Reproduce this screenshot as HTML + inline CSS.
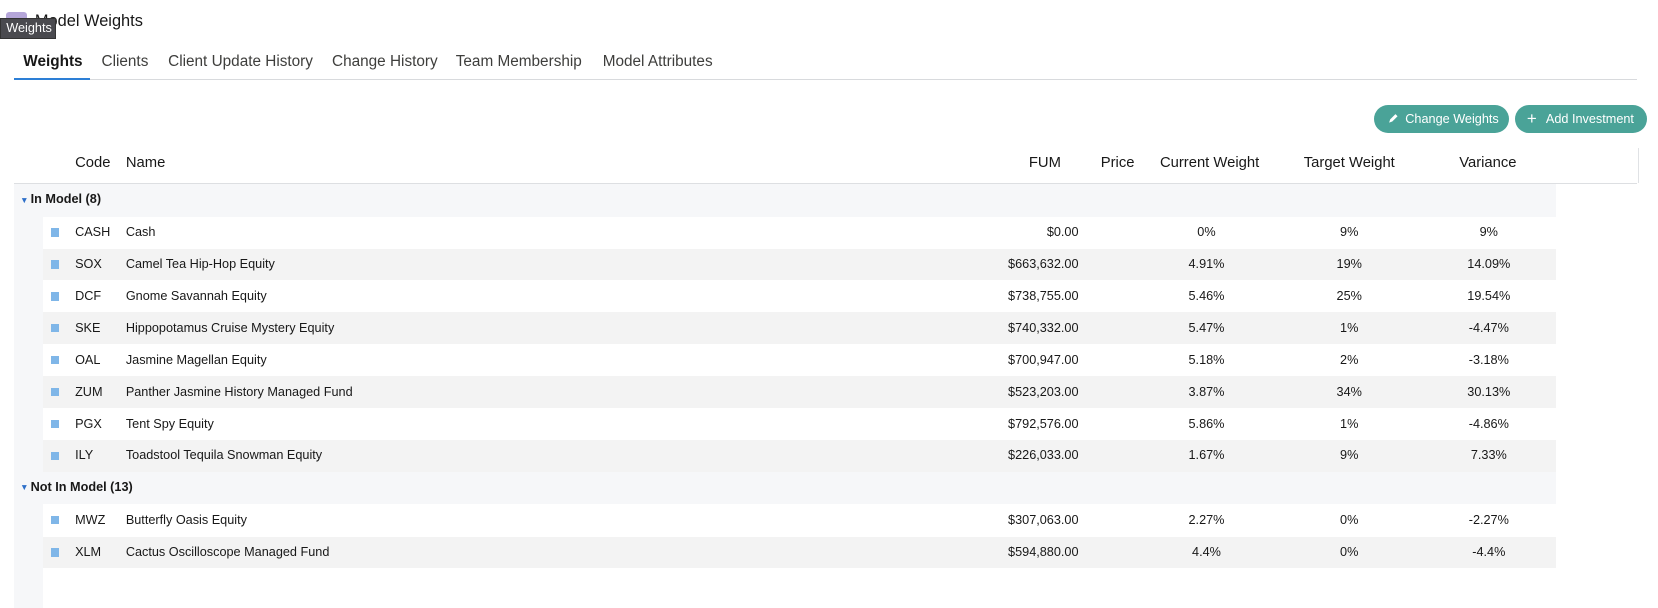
<!DOCTYPE html>
<html><head><style>
*{margin:0;padding:0;box-sizing:border-box}
body{width:1658px;height:575px;overflow:hidden;background:#fff;font-family:"Liberation Sans",sans-serif;color:#181818}
#w{position:relative;width:1568px;height:544px;zoom:1.05740}
.a{position:absolute;white-space:nowrap}
.tab{position:absolute;top:50px;font-size:14.5px;color:#3e3e3c}
.h{position:absolute;top:147px;font-size:14px;color:#181818}
.row{position:absolute;left:41px;width:1431px;height:30px;font-size:12px;color:#181818}
.row span{position:absolute;top:8px}
.row span.c{width:120px;margin-left:-60px;text-align:center}
.sq{position:absolute;left:7px;top:11px;width:8px;height:8px;background:#7fb6e8}
.g{position:absolute;left:13px;width:1459px;height:31px;background:#f6f7f9;font-size:12px;font-weight:bold}
.g .t{position:absolute;left:6px;top:10px;font-size:8px;color:#2d6fc9;font-weight:normal}
.g .l{position:absolute;left:16px;top:8px}
.btn{position:absolute;top:99px;height:27px;border-radius:14px;background:#4aa398;color:#fff;font-size:12px;line-height:27px}
</style></head><body><div id="w">
<div class="a" style="left:6px;top:11px;width:20px;height:20px;background:#b5a6d9;border-radius:3px"></div>
<div class="a" style="left:33px;top:11px;font-size:15.5px">Model Weights</div>
<div class="a" style="left:0;top:17px;width:53px;height:20px;background:#4a4a4f;color:#fff;font-size:12px;line-height:18px;padding-left:5px;border:1px solid #333">Weights</div>
<div class="tab" style="left:22px;font-weight:bold;color:#181818">Weights</div>
<div class="tab" style="left:96px">Clients</div>
<div class="tab" style="left:159px">Client Update History</div>
<div class="tab" style="left:314px">Change History</div>
<div class="tab" style="left:431px">Team Membership</div>
<div class="tab" style="left:570px">Model Attributes</div>
<div class="a" style="left:13px;top:75px;width:1535px;height:1px;background:#d8dadd"></div>
<div class="a" style="left:13px;top:74px;width:72px;height:2px;background:#2d7fd6"></div>
<div class="btn" style="left:1299px;width:128px;padding-left:30px">Change Weights</div>
<svg class="a" style="left:1312px;top:106px" width="12" height="12" viewBox="0 0 12 12"><path d="M2 10l1-3 5-5 2 2-5 5z" fill="#fff"/></svg>
<div class="btn" style="left:1433px;width:125px;padding-left:29px">Add Investment</div>
<div class="a" style="left:1444px;top:103px;color:#fff;font-size:16px">+</div>
<div class="h" style="left:71px">Code</div>
<div class="h" style="left:119px">Name</div>
<div class="h" style="left:973px">FUM</div>
<div class="h" style="left:1041px">Price</div>
<div class="h" style="left:1097px">Current Weight</div>
<div class="h" style="left:1233px">Target Weight</div>
<div class="h" style="left:1380px">Variance</div>
<div class="a" style="left:1549px;top:140px;width:1px;height:33px;background:#e0e2e5"></div>
<div class="a" style="left:13px;top:173px;width:1535px;height:1px;background:#dddfe2"></div>
<div class="a" style="left:13px;top:174px;width:28px;height:401px;background:#f6f7f9"></div>
<div class="g" style="top:174px"><span class="t">▼</span><span class="l">In Model (8)</span></div>
<div id="rows"></div>
<div class="g" style="top:446px"><span class="t">▼</span><span class="l">Not In Model (13)</span></div>
<script>
var d=[["CASH","Cash","$0.00","0%","9%","9%"],["SOX","Camel Tea Hip-Hop Equity","$663,632.00","4.91%","19%","14.09%"],["DCF","Gnome Savannah Equity","$738,755.00","5.46%","25%","19.54%"],["SKE","Hippopotamus Cruise Mystery Equity","$740,332.00","5.47%","1%","-4.47%"],["OAL","Jasmine Magellan Equity","$700,947.00","5.18%","2%","-3.18%"],["ZUM","Panther Jasmine History Managed Fund","$523,203.00","3.87%","34%","30.13%"],["PGX","Tent Spy Equity","$792,576.00","5.86%","1%","-4.86%"],["ILY","Toadstool Tequila Snowman Equity","$226,033.00","1.67%","9%","7.33%"],
["MWZ","Butterfly Oasis Equity","$307,063.00","2.27%","0%","-2.27%"],["XLM","Cactus Oscilloscope Managed Fund","$594,880.00","4.4%","0%","-4.4%"],["","","","","",""]];
var h="";
d.forEach(function(r,i){var top=i<8?205+i*30.15:477+(i-8)*30.5;var k=i<8?i:i-8;var bg=(k%2)?"#f3f3f3":"#fff";
h+='<div class="row" style="top:'+top+'px;background:'+bg+'">'+(r[0]?'<div class="sq"></div>':'')+'<span style="left:30px">'+r[0]+'</span><span style="left:78px">'+r[1]+'</span><span style="right:452px">'+r[2]+'</span><span class="c" style="left:1100px">'+r[3]+'</span><span class="c" style="left:1235px">'+r[4]+'</span><span class="c" style="left:1367px">'+r[5]+'</span></div>';});
document.getElementById("rows").innerHTML=h;
</script>
</div></body></html>
